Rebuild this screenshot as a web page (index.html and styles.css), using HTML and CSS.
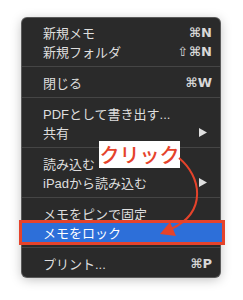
FILE: index.html
```html
<!DOCTYPE html>
<html lang="ja">
  <head>
    <meta charset="UTF-8" />
    <meta name="viewport" content="width=device-width, initial-scale=1.0" />
    <title>メモ</title>
    <link rel="stylesheet" href="styles.css">
  </head>
  <body>
    <div class="stage">
      <div class="menu">
        <div class="item"><span>新規メモ</span><span class="key">⌘N</span></div>
        <div class="item"><span>新規フォルダ</span><span class="key"><span class="shift">⇧</span>⌘N</span></div>
        <div class="sep"></div>
        <div class="item"><span>閉じる</span><span class="key">⌘W</span></div>
        <div class="sep"></div>
        <div class="item"><span>PDFとして書き出す...</span></div>
        <div class="item"><span>共有</span><svg class="sub" width="8" height="9" viewBox="0 0 8 9"><polygon points="0,0 8,4.5 0,9" fill="#e0e0e0"/></svg></div>
        <div class="sep"></div>
        <div class="item"><span>読み込む</span></div>
        <div class="item"><span>iPadから読み込む</span><svg class="sub" width="8" height="9" viewBox="0 0 8 9"><polygon points="0,0 8,4.5 0,9" fill="#e0e0e0"/></svg></div>
        <div class="sep"></div>
        <div class="item"><span>メモをピンで固定</span></div>
        <div class="item active"><span>メモをロック</span></div>
        <div class="sep"></div>
        <div class="item"><span>プリント...</span><span class="key">⌘P</span></div>
      </div>

      <div class="callout">クリック</div>
      <svg class="arrow" width="243" height="300" viewBox="0 0 243 300">
        <path d="M179 158 C201 176, 208 212, 171 229" fill="none" stroke="#e5432b" stroke-width="2"/>
        <polygon points="160,234 170,222 176,236" fill="#e5432b"/>
      </svg>
    </div>
  </body>
</html>
```
FILE: styles.css
```css
body {
  margin: 0;
  background: #ffffff;
  font-family: "Liberation Sans", "Noto Sans CJK JP", sans-serif;
}
.stage {
  position: relative;
  width: 243px;
  height: 300px;
  padding-top: 18px;
  box-sizing: border-box;
}
.menu {
  margin-left: 22px;
  width: 198px;
  padding: 5px 0 4px;
  background: #2a2a2a;
  border-radius: 5px;
  box-shadow: 0 0 0 1px #5a5a5a, 0 2px 12px rgba(0, 0, 0, 0.28);
  color: #dedede;
  font-size: 13px;
}
.item {
  display: flex;
  justify-content: space-between;
  align-items: center;
  height: 19px;
  padding: 0 8px 0 21px;
}
.key {
  font-family: "DejaVu Sans", "Liberation Sans", sans-serif;
  font-size: 13px;
  font-weight: bold;
  color: #d8d8d8;
}
.shift {
  font-weight: normal;
  margin-right: 1px;
}
.sub {
  margin-right: 5px;
}
.sep {
  height: 1px;
  margin: 5px 0 6px;
  background: #454545;
}
.active {
  background: #2d6fd9;
  color: #ffffff;
  outline: 3px solid #e5432b;
  margin-right: -2px;
}
.callout {
  position: absolute;
  left: 99px;
  top: 141px;
  width: 81px;
  height: 27px;
  background: #ffffff;
  color: #e5432b;
  font-family: "Noto Sans CJK JP", sans-serif;
  font-size: 20px;
  font-weight: 500;
  line-height: 27px;
  text-align: center;
  letter-spacing: 0;
}
.arrow {
  position: absolute;
  left: 0;
  top: 0;
}
```
